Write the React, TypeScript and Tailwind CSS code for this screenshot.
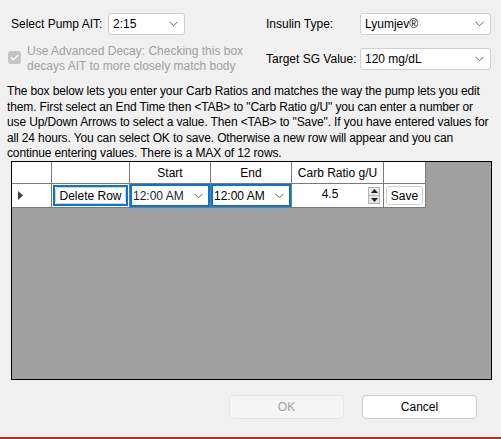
import React from "react";

const Chevron = () => (
  <svg width="9" height="6" viewBox="0 0 9 6" className="shrink-0">
    <path d="M0.5 0.8 L4.5 4.8 L8.5 0.8" fill="none" stroke="#606060" strokeWidth="1" />
  </svg>
);

function Combo({ w, value, className = "" }: { w: string; value: string; className?: string }) {
  return (
    <div
      className={`${w} h-[22px] bg-white border border-[#cfcfcf] rounded-[3px] flex items-center justify-between pl-[4px] pr-[6px] text-[#000] ${className}`}
    >
      <span>{value}</span>
      <Chevron />
    </div>
  );
}

export default function App() {
  const lines = [
    "The box below lets you enter your Carb Ratios and matches the way the pump lets you edit",
    'them. First select an End Time then <TAB> to "Carb Ratio g/U" you can enter a number or',
    'use Up/Down Arrows to select a value. Then <TAB> to "Save". If you have entered values for',
    "all 24 hours. You can select OK to save. Otherwise a new row will appear and you can",
    "continue entering values. There is a MAX of 12 rows.",
  ];
  const cell = "border-r border-b border-[#7a7a7a] bg-white flex items-center";
  return (
    <div
      className="w-[501px] h-[439px] bg-[#f0f0f0] overflow-hidden flex flex-col text-[12px] text-black border-b-2 border-[#c42b1c]"
      style={{ fontFamily: '"Liberation Sans", Arial, sans-serif' }}
    >
      {/* top */}
      <div className="flex h-[84px] shrink-0">
        <div className="w-[250px] pt-[13px]">
          <div className="flex items-center pl-[11px]">
            <span className="w-[97px]">Select Pump AIT:</span>
            <Combo w="w-[77px]" value="2:15" />
          </div>
          <div className="flex pl-[8px] mt-[9px]">
            <div className="w-[13px] h-[13px] mt-[7px] rounded-[3px] bg-[#c4c4c4] flex items-center justify-center shrink-0">
              <svg width="9" height="7" viewBox="0 0 9 7">
                <path d="M1 3.5 L3.4 5.8 L8 1.2" fill="none" stroke="#ffffff" strokeWidth="1.3" />
              </svg>
            </div>
            <div className="ml-[6px] leading-[15px] text-[#a0a0a0] whitespace-nowrap">
              <div>Use Advanced Decay: Checking this box</div>
              <div>decays AIT to more closely match body</div>
            </div>
          </div>
        </div>
        <div className="pt-[13px] pl-[16px]">
          <div className="flex items-center">
            <span className="w-[94px]">Insulin Type:</span>
            <Combo w="w-[131px]" value="Lyumjev®" />
          </div>
          <div className="flex items-center mt-[13px]">
            <span className="w-[94px]">Target SG Value:</span>
            <Combo w="w-[131px]" value="120 mg/dL" />
          </div>
        </div>
      </div>

      {/* paragraph */}
      <div className="pl-[7px] leading-[15.5px] whitespace-nowrap h-[77px] shrink-0 tracking-[-0.13px]">
        {lines.map((l, i) => (
          <div key={i}>{l}</div>
        ))}
      </div>

      {/* grid */}
      <div className="ml-[11px] w-[481px] h-[219px] border border-black bg-[#a0a0a0] shrink-0">
        <div className="flex h-[22px]">
          <div className={`${cell} w-[40px]`} />
          <div className={`${cell} w-[78px]`} />
          <div className={`${cell} w-[81px] justify-center`}>Start</div>
          <div className={`${cell} w-[81px] justify-center`}>End</div>
          <div className={`${cell} w-[92px] justify-center`}>Carb Ratio g/U</div>
          <div className={`${cell} w-[42px]`} />
        </div>
        <div className="flex h-[24px]">
          <div className={`${cell} w-[40px] pl-[6px]`}>
            <svg width="6" height="9" viewBox="0 0 6 9">
              <path d="M0 0 L5 4.5 L0 9 Z" fill="#404040" />
            </svg>
          </div>
          <div className={`${cell} w-[78px] p-[1px]`}>
            <div className="w-full h-full border-2 border-[#0078d7] bg-white flex items-center justify-center">
              <div className="w-full h-full border border-[#d0d0d0] rounded-[3px] flex items-center justify-center">
                Delete Row
              </div>
            </div>
          </div>
          <div className={`${cell} w-[81px]`}>
            <div className="w-full h-full border-2 border-[#0078d7] flex items-center justify-between pl-[1px] pr-[5px] text-[#1a1a3a]">
              <span>12:00 AM</span>
              <Chevron />
            </div>
          </div>
          <div className={`${cell} w-[81px]`}>
            <div className="w-full h-full border-2 border-[#0078d7] flex items-center justify-between pl-[1px] pr-[5px]">
              <span>12:00 AM</span>
              <Chevron />
            </div>
          </div>
          <div className={`${cell} w-[92px] relative`}>
            <span className="w-[76px] text-center -mt-[3px]">4.5</span>
            <div className="w-[12px] h-[17px] bg-[#e6e6e6] border border-[#b4b4b4] flex flex-col items-center justify-around">
              <svg width="7" height="4" viewBox="0 0 7 4">
                <path d="M0 4 L3.5 0 L7 4 Z" fill="#202020" />
              </svg>
              <div className="w-full h-[1px] bg-[#b4b4b4]" />
              <svg width="7" height="4" viewBox="0 0 7 4">
                <path d="M0 0 L3.5 4 L7 0 Z" fill="#202020" />
              </svg>
            </div>
          </div>
          <div className={`${cell} w-[42px] p-[2px]`}>
            <div className="w-full h-full border border-[#d0d0d0] rounded-[3px] flex items-center justify-center bg-[#fdfdfd]">
              Save
            </div>
          </div>
        </div>
      </div>

      {/* buttons */}
      <div className="flex mt-[15px] pl-[229px] gap-[18px]">
        <div className="w-[115px] h-[24px] rounded-[4px] bg-[#f5f5f5] border border-[#e5e5e5] text-[#a0a0a0] flex items-center justify-center">
          OK
        </div>
        <div className="w-[115px] h-[24px] rounded-[4px] bg-white border border-[#cccccc] flex items-center justify-center">
          Cancel
        </div>
      </div>
    </div>
  );
}
